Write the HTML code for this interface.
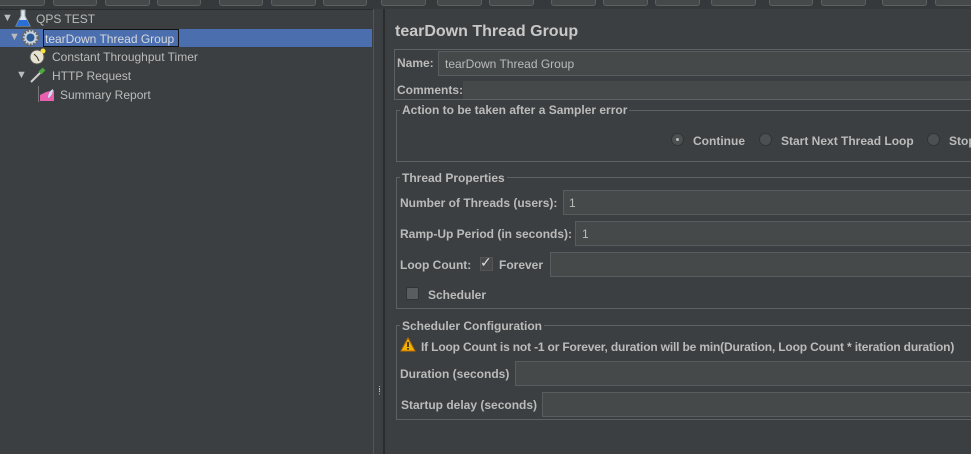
<!DOCTYPE html>
<html><head><meta charset="utf-8"><style>
*{margin:0;padding:0;box-sizing:border-box}
body{width:971px;height:454px;overflow:hidden;background:#3c3f41;font-family:"Liberation Sans",sans-serif;font-size:12px;color:#bbbbbb;position:relative}
.a{position:absolute}
.btn{position:absolute;top:-4px;height:10px;background:#45494a;border:1px solid #5e6060;border-radius:3px}
.t{position:absolute;white-space:nowrap}
.b{font-weight:bold}
.inp{position:absolute;background:#45494a;border:1px solid #5a5d5f}
.fs{position:absolute;border:1px solid #5e6163}
.lg{position:absolute;background:#3c3f41;padding:0 2px;font-weight:bold;line-height:14px}
.rad{position:absolute;width:13px;height:13px;border-radius:50%;background:#4c5052;border:1px solid #333}
</style></head><body>
<div class="a" style="left:0;top:0;width:971px;height:9px;background:#36393b"></div>
<div class="btn" style="left:-2px;width:47px"></div>
<div class="btn" style="left:53px;width:44px"></div>
<div class="btn" style="left:105px;width:45px"></div>
<div class="btn" style="left:157px;width:44px"></div>
<div class="btn" style="left:219px;width:44px"></div>
<div class="btn" style="left:271px;width:45px"></div>
<div class="btn" style="left:323px;width:44px"></div>
<div class="btn" style="left:381px;width:45px"></div>
<div class="btn" style="left:437px;width:45px"></div>
<div class="btn" style="left:489px;width:45px"></div>
<div class="btn" style="left:551px;width:45px"></div>
<div class="btn" style="left:603px;width:45px"></div>
<div class="btn" style="left:655px;width:45px"></div>
<div class="btn" style="left:711px;width:45px"></div>
<div class="btn" style="left:769px;width:44px"></div>
<div class="btn" style="left:821px;width:45px"></div>
<div class="btn" style="left:882px;width:45px"></div>
<div class="btn" style="left:935px;width:45px"></div>

<!-- tree -->
<div class="a" style="left:0;top:9px;width:373px;height:445px;background:#3c3f41;border-top:1px solid #2b2b2b"></div>
<div class="a" style="left:373px;top:9px;width:1px;height:445px;background:#555"></div>
<div class="a" style="left:383px;top:9px;width:2px;height:445px;background:#2b2b2b"></div>
<div class="t" style="left:376px;top:388px;font-size:7px;line-height:3px;color:#ddd">⋮<br>⋮</div>

<div class="a" style="left:0;top:29px;width:372px;height:18px;background:#4b6eaf"></div>
<div class="t" style="left:2px;top:12px;font-size:11px">▼</div>
<svg class="a" style="left:15px;top:9px" width="16" height="19"><path d="M6 1h4v6l5 10H1l5-10z" fill="#dfe6f0" stroke="#9aa" stroke-width="1"/><path d="M4 11h8l3 6H1z" fill="#2a6fd6"/></svg>
<div class="t" style="left:36px;top:12px;font-size:12px">QPS TEST</div>
<div class="t" style="left:9px;top:31px;font-size:11px">▼</div>
<svg class="a" style="left:21px;top:28px" width="19" height="19"><circle cx="9.5" cy="9.5" r="7.5" fill="#c9d3de" stroke="#666" stroke-dasharray="2 1.5" stroke-width="3"/><circle cx="9.5" cy="9.5" r="4" fill="#2a5c9a"/></svg>
<div class="t" style="left:43px;top:29px;height:18px;width:136px;border:1px solid #111;padding:2px 0 0 1px;color:#d6d9dc">tearDown Thread Group</div>
<svg class="a" style="left:29px;top:47px" width="18" height="18"><circle cx="8" cy="10" r="7" fill="#e8e2d0" stroke="#555"/><path d="M8 10l-3-3M8 10l2 4" stroke="#333"/><circle cx="14" cy="4" r="2.5" fill="#f5e23a"/></svg>
<div class="t" style="left:52px;top:50px">Constant Throughput Timer</div>
<div class="t" style="left:16px;top:69px;font-size:11px">▼</div>
<svg class="a" style="left:29px;top:66px" width="18" height="18"><path d="M2 16l10-10" stroke="#ccc" stroke-width="2"/><path d="M11 7l4-4" stroke="#4caa3c" stroke-width="4"/></svg>
<div class="t" style="left:52px;top:69px">HTTP Request</div>
<div class="a" style="left:38px;top:86px;width:1px;height:16px;background:#777"></div>
<svg class="a" style="left:39px;top:86px" width="16" height="16"><path d="M1 15V9l6-3 8-2v11z" fill="#e860b0"/><path d="M9 12c0-5 3-8 5-9 0 4-2 8-5 9z" fill="#cfe0f5"/></svg>
<div class="t" style="left:60px;top:88px">Summary Report</div>

<!-- right -->
<div class="t b" style="left:395px;top:23px;font-size:16px;color:#c8c8c8">tearDown Thread Group</div>
<div class="fs" style="left:394px;top:49px;width:590px;height:51px"></div>
<div class="t b" style="left:397px;top:56px">Name:</div>
<div class="inp" style="left:438px;top:51px;width:540px;height:25px"></div>
<div class="t" style="left:445px;top:57px">tearDown Thread Group</div>
<div class="t b" style="left:397px;top:83px">Comments:</div>
<div class="inp" style="left:463px;top:81px;width:520px;height:18px;border:none;background:#45494a"></div>

<div class="fs" style="left:396px;top:110px;width:590px;height:52px"></div>
<div class="lg" style="left:400px;top:103px">Action to be taken after a Sampler error</div>
<div class="rad" style="left:671px;top:133px"><div style="position:absolute;left:4px;top:4px;width:3px;height:3px;background:#bbb;border-radius:50%"></div></div>
<div class="t b" style="left:693px;top:134px">Continue</div>
<div class="rad" style="left:759px;top:133px"></div>
<div class="t b" style="left:781px;top:134px">Start Next Thread Loop</div>
<div class="rad" style="left:927px;top:133px"></div>
<div class="t b" style="left:949px;top:134px">Stop</div>

<div class="fs" style="left:396px;top:177px;width:590px;height:132px"></div>
<div class="lg" style="left:400px;top:171px">Thread Properties</div>
<div class="t b" style="left:400px;top:196px">Number of Threads (users):</div>
<div class="inp" style="left:563px;top:190px;width:420px;height:25px"></div>
<div class="t" style="left:569px;top:196px">1</div>
<div class="t b" style="left:400px;top:227px">Ramp-Up Period (in seconds):</div>
<div class="inp" style="left:575px;top:221px;width:410px;height:25px"></div>
<div class="t" style="left:582px;top:227px">1</div>
<div class="t b" style="left:400px;top:258px">Loop Count:</div>
<div class="a" style="left:480px;top:257px;width:13px;height:14px;background:#45494a;border:1px solid #555"></div>
<div class="t" style="left:480px;top:254px;font-size:14px;color:#ddd">✓</div>
<div class="t b" style="left:499px;top:258px">Forever</div>
<div class="inp" style="left:550px;top:252px;width:430px;height:25px"></div>
<div class="a" style="left:406px;top:287px;width:13px;height:13px;background:#5a5d5f;border:1px solid #333;border-radius:2px"></div>
<div class="t b" style="left:428px;top:288px">Scheduler</div>

<div class="fs" style="left:396px;top:325px;width:590px;height:95px"></div>
<div class="lg" style="left:400px;top:319px">Scheduler Configuration</div>
<svg class="a" style="left:400px;top:337px" width="16" height="15"><path d="M8 1L15 14H1z" fill="#f0b400" stroke="#c07000"/><rect x="7.2" y="5" width="1.6" height="5" fill="#222"/><rect x="7.2" y="11" width="1.6" height="1.6" fill="#222"/></svg>
<div class="t b" style="left:421px;top:340px;letter-spacing:-0.17px">If Loop Count is not -1 or Forever, duration will be min(Duration, Loop Count * iteration duration)</div>
<div class="t b" style="left:400px;top:367px">Duration (seconds)</div>
<div class="inp" style="left:515px;top:361px;width:470px;height:25px"></div>
<div class="t b" style="left:401px;top:398px">Startup delay (seconds)</div>
<div class="inp" style="left:542px;top:392px;width:440px;height:25px"></div>
</body></html>
